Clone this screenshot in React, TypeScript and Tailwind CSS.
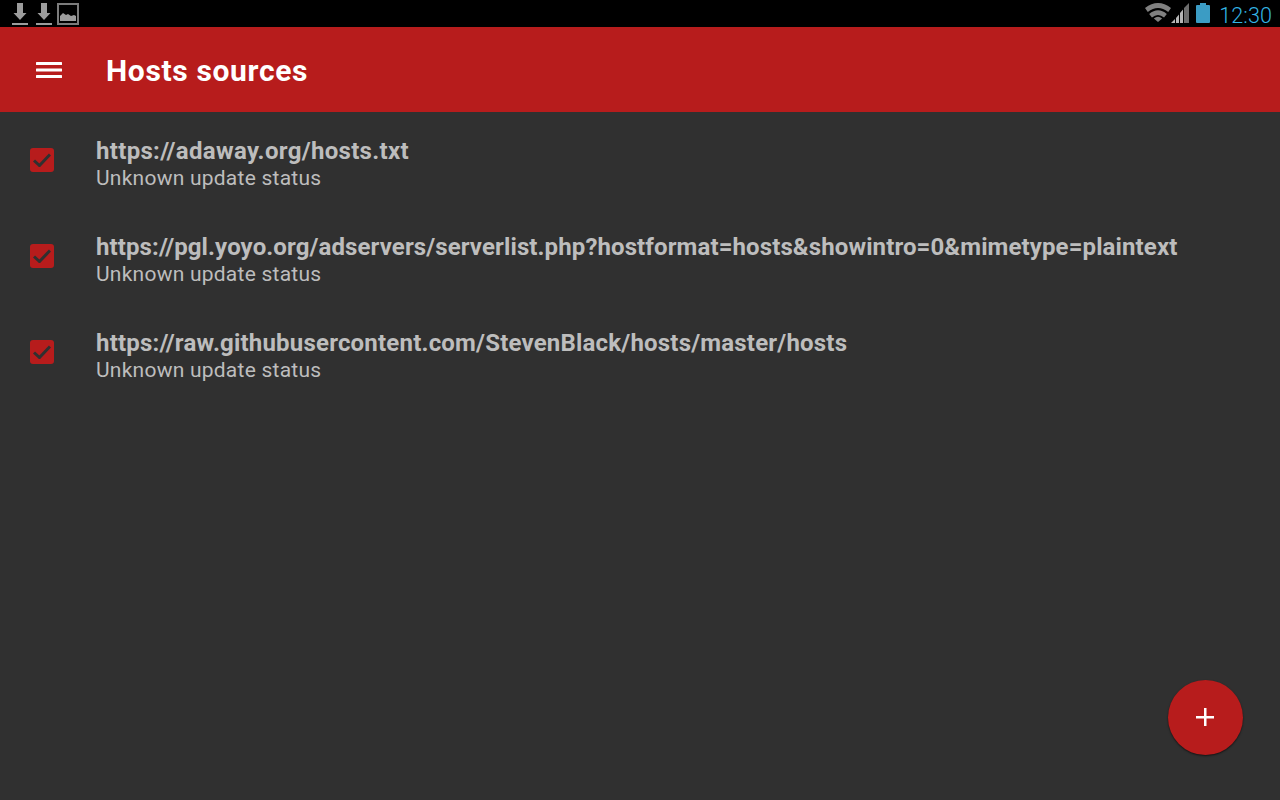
import React from "react";

const sources = [
  { url: "https://adaway.org/hosts.txt", tracking: "tracking-[0.32px]" },
  {
    url: "https://pgl.yoyo.org/adservers/serverlist.php?hostformat=hosts&showintro=0&mimetype=plaintext",
    tracking: "tracking-[0.11px]",
  },
  { url: "https://raw.githubusercontent.com/StevenBlack/hosts/master/hosts", tracking: "tracking-[0.2px]" },
];

function DownloadIcon() {
  return (
    <svg width="16" height="22" viewBox="0 0 16 22" fill="#9c9c9c" className="mt-[1px]">
      <path d="M5 0h6v10h3.500L8 17 1.500 10H5z" />
      <rect x="0" y="20" width="16" height="2" />
    </svg>
  );
}

function PictureIcon() {
  return (
    <svg width="22" height="22" viewBox="0 0 22 22" className="mt-[1px]">
      <rect x="1" y="1" width="20" height="20" fill="none" stroke="#7c7c7c" strokeWidth="2" />
      <path d="M3 18v-5l3-3 3 2 2-1 3 2 3-1 2 1v5z" fill="#9c9c9c" />
    </svg>
  );
}

function StatusIcons() {
  return (
    <div className="flex items-start h-full">
      <svg width="26" height="20" viewBox="0 0 28 20" preserveAspectRatio="none" className="mt-[2px]">
        <path d="M0 6 Q14 -4 28 6 L25 10 Q14 2 3 10z" fill="#808080" />
        <path d="M4.500 12 Q14 4.500 23.500 12 L20.500 15.500 Q14 10.500 7.500 15.500z" fill="#808080" />
        <path d="M9.500 16.500 Q14 13 18.500 16.500 L14 20z" fill="#808080" />
      </svg>
      <svg width="18" height="20" viewBox="0 0 18 20" className="mt-[3px]">
        <path d="M0 20 L4 16 V20z M5 15 L8 11.500 V20 H5z M9 10 L12 6.500 V20 H9z" fill="#b5b5b5" />
        <path d="M13 5 L18 0 V20 H13z" fill="#6e6e6e" />
      </svg>
      <svg width="14" height="20" viewBox="0 0 14 20" className="ml-[7px] mt-[3px]">
        <path d="M4 0h6v2h3a1 1 0 0 1 1 1v16a1 1 0 0 1-1 1H1a1 1 0 0 1-1-1V3a1 1 0 0 1 1-1h3z" fill="#3b9cc4" />
      </svg>
    </div>
  );
}

export default function App() {
  return (
    <div className="w-[1280px] h-[800px] flex flex-col overflow-hidden bg-[#303030] font-['Roboto',sans-serif] relative">
      <div className="h-[27px] bg-black flex items-center justify-between pl-3 pr-2 shrink-0">
        <div className="flex items-center gap-2">
          <DownloadIcon />
          <DownloadIcon />
          <div className="ml-[-3px]">
            <PictureIcon />
          </div>
        </div>
        <div className="flex items-center h-full">
          <StatusIcons />
          <span className="ml-[9px] mt-[5px] text-[21.500px] leading-none tracking-[0.1px] text-[#33b5e5] font-light">
            12:30
          </span>
        </div>
      </div>

      <div className="h-[85px] bg-[#b71c1c] flex items-center shrink-0">
        <svg width="26" height="16" viewBox="0 0 26 16" className="ml-[36px] mt-[1px]">
          <rect y="0" width="26" height="3" rx="0.5" fill="#fff" />
          <rect y="6.500" width="26" height="3" rx="0.5" fill="#fff" />
          <rect y="13" width="26" height="3" rx="0.5" fill="#fff" />
        </svg>
        <h1 className="ml-[44px] mt-[2px] text-[30px] font-bold text-white leading-none tracking-[0.65px]">
          Hosts sources
        </h1>
      </div>

      <ul className="flex flex-col">
        {sources.map((source) => (
          <li key={source.url} className="h-[96px] flex items-center">
            <div className="ml-[30px] w-[24px] h-[24px] rounded-[3px] bg-[#b71c1c] flex items-center justify-center">
              <svg width="18" height="14" viewBox="0 0 18 14">
                <path d="M1 7.500l5.500 5L17 1.500" fill="none" stroke="#303030" strokeWidth="3" />
              </svg>
            </div>
            <div className="ml-[42px] mt-[8px] flex flex-col">
              <span className={`text-[24px] leading-[28px] font-bold text-[#bdbdbd] whitespace-nowrap ${source.tracking}`}>
                {source.url}
              </span>
              <span className="text-[21px] leading-[26px] tracking-[0.24px] text-[#bdbdbd]">Unknown update status</span>
            </div>
          </li>
        ))}
      </ul>

      <button className="absolute left-[1168px] top-[680px] w-[75px] h-[75px] rounded-full bg-[#b71c1c] shadow-[0_1px_2px_rgba(0,0,0,0.6)] flex items-center justify-center">
        <svg width="18" height="18" viewBox="0 0 18 18" className="mr-[1px] mb-[1px]">
          <rect x="8" y="0" width="2.500" height="18" fill="#fff" />
          <rect x="0" y="8" width="18" height="2.500" fill="#fff" />
        </svg>
      </button>
    </div>
  );
}
